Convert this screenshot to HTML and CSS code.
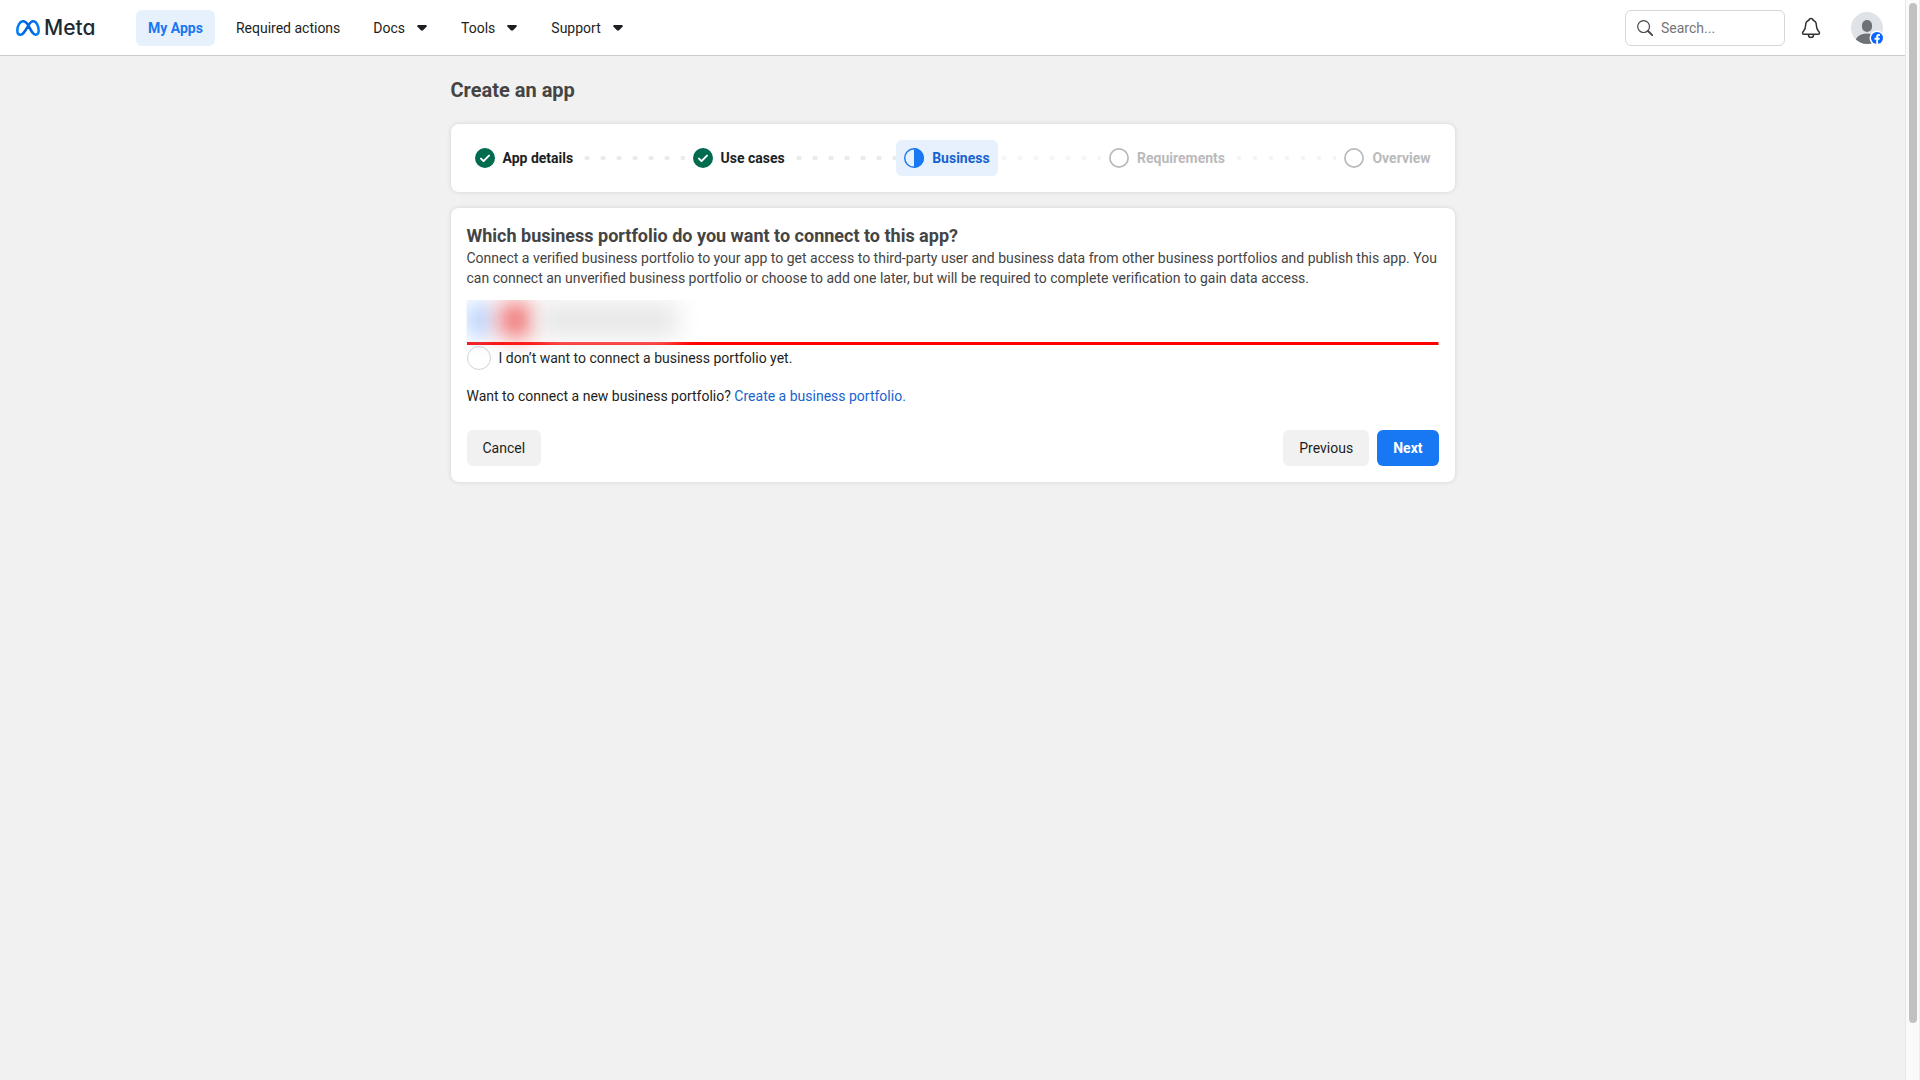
FILE: index.html
```
<!DOCTYPE html>
<html lang="en">

<head>
    <meta charset="UTF-8">
    <meta name="viewport" content="width=device-width, initial-scale=1">
    <title>Create an app</title>
    <link rel="stylesheet" href="styles.css">
</head>

<body>
    <div class="page">
        <header class="topbar">
            <a href="#" class="logo">
                <svg width="24" height="16" viewBox="0 0 24 16" fill="none">
                    <defs>
                        <linearGradient id="metaBlue" x1="0" y1="0" x2="24" y2="0" gradientUnits="userSpaceOnUse">
                            <stop offset="0" stop-color="#0082fb"/>
                            <stop offset="0.4" stop-color="#0064e0"/>
                            <stop offset="0.6" stop-color="#0064e0"/>
                            <stop offset="1" stop-color="#0082fb"/>
                        </linearGradient>
                    </defs>
                    <path d="M12 4.8C10.4 2.6 9 1.3 7.2 1.3C3.9 1.3 1.3 5.8 1.3 10.4C1.3 13.1 2.5 14.7 4.5 14.7C6.6 14.7 8 13.2 12 6.2C13.8 3 15.1 1.3 17.1 1.3C20.3 1.3 22.7 5.8 22.7 10.6C22.7 13.1 21.6 14.7 19.6 14.7C17.4 14.7 16.2 12.8 12 4.8Z" stroke="url(#metaBlue)" stroke-width="2.5" stroke-linejoin="round"/>
                </svg>
                <span>Meta</span>
            </a>
            <nav class="nav">
                <a href="#" class="nav-item active">My Apps</a>
                <a href="#" class="nav-item">Required actions</a>
                <button class="nav-item">Docs
                    <svg width="12" height="8" viewBox="0 0 12 8"><path d="M2.2 1h7.6c.9 0 1.3 1 .7 1.7L7.1 6.3c-.6.6-1.6.6-2.2 0L1.5 2.7C.9 2 1.3 1 2.2 1z" fill="#1c1e21"/></svg>
                </button>
                <button class="nav-item">Tools
                    <svg width="12" height="8" viewBox="0 0 12 8"><path d="M2.2 1h7.6c.9 0 1.3 1 .7 1.7L7.1 6.3c-.6.6-1.6.6-2.2 0L1.5 2.7C.9 2 1.3 1 2.2 1z" fill="#1c1e21"/></svg>
                </button>
                <button class="nav-item">Support
                    <svg width="12" height="8" viewBox="0 0 12 8"><path d="M2.2 1h7.6c.9 0 1.3 1 .7 1.7L7.1 6.3c-.6.6-1.6.6-2.2 0L1.5 2.7C.9 2 1.3 1 2.2 1z" fill="#1c1e21"/></svg>
                </button>
            </nav>
            <div class="tools">
                <label class="search">
                    <svg width="16" height="16" viewBox="0 0 16 16" fill="none" stroke="#444" stroke-width="1.2" stroke-linecap="round">
                        <circle cx="6.6" cy="6.6" r="5.9"/>
                        <path d="M11 11l4.2 4.2" stroke-width="1.8"/>
                    </svg>
                    <input type="text" placeholder="Search..." aria-label="Search">
                </label>
                <button class="bell" aria-label="Notifications">
                    <svg width="20" height="22" viewBox="0 0 20 22" fill="none" stroke="#333" stroke-width="1.5" stroke-linejoin="round">
                        <path d="M8.2 3.3C5.5 4 4.6 6.2 4.6 8.5C4.6 12 3.6 13 2.2 14.6C1 16 1.5 17.3 3 17.3H17C18.5 17.3 19 16 17.8 14.6C16.4 13 15.4 12 15.4 8.5C15.4 6.2 14.5 4 11.8 3.3"/>
                        <path d="M8 3.5a2 2 0 0 1 4 0"/>
                        <path d="M7.5 18a2.5 2.5 0 0 0 5 0"/>
                    </svg>
                </button>
                <button class="avatar" aria-label="Account">
                    <svg width="34" height="34" viewBox="0 0 34 34">
                        <clipPath id="face"><circle cx="16" cy="16" r="16"/></clipPath>
                        <g clip-path="url(#face)">
                            <rect width="32" height="32" fill="#dfe3e8"/>
                            <rect x="11" y="8" width="10" height="12" rx="5" fill="#6d7278"/>
                            <path d="M4 32c0-7 5-10.5 12-10.5s12 3.5 12 10.5z" fill="#6d7278"/>
                        </g>
                        <circle cx="26" cy="26" r="7.5" fill="#fff"/>
                        <circle cx="26" cy="26" r="6" fill="#0866ff"/>
                        <path d="M25.2 32v-4.3h-1.7v-2h1.7v-1.1c0-1.7.9-2.600 2.500-2.600.5 0 .9.1 1.200.2v1.700h-.8c-.7 0-1 .3-1 1v.8h1.700l-.3 2h-1.400V32z" fill="#fff"/>
                    </svg>
                </button>
            </div>
        </header>

        <main class="content">
            <h1>Create an app</h1>

            <ol class="card steps">
                <li class="step">
                    <svg width="20" height="20" viewBox="0 0 20 20"><circle cx="10" cy="10" r="10" fill="#006b4e"/><path d="M6 10.600l2.500 2.500L14 7.600" fill="none" stroke="#fff" stroke-width="2" stroke-linecap="round" stroke-linejoin="round"/></svg>
                    App details
                </li>
                <li class="dots" aria-hidden="true"></li>
                <li class="step">
                    <svg width="20" height="20" viewBox="0 0 20 20"><circle cx="10" cy="10" r="10" fill="#006b4e"/><path d="M6 10.600l2.500 2.500L14 7.600" fill="none" stroke="#fff" stroke-width="2" stroke-linecap="round" stroke-linejoin="round"/></svg>
                    Use cases
                </li>
                <li class="dots" aria-hidden="true"></li>
                <li class="step current">
                    <svg width="20" height="20" viewBox="0 0 20 20"><circle cx="10" cy="10" r="9.300" fill="none" stroke="#1877f2" stroke-width="1.400"/><path d="M10 0a10 10 0 0 1 0 20z" fill="#1877f2"/></svg>
                    Business
                </li>
                <li class="dots light" aria-hidden="true"></li>
                <li class="step todo">
                    <svg width="20" height="20" viewBox="0 0 20 20"><circle cx="10" cy="10" r="9.100" fill="none" stroke="#bababa" stroke-width="1.700"/></svg>
                    Requirements
                </li>
                <li class="dots light" aria-hidden="true"></li>
                <li class="step todo">
                    <svg width="20" height="20" viewBox="0 0 20 20"><circle cx="10" cy="10" r="9.100" fill="none" stroke="#bababa" stroke-width="1.700"/></svg>
                    Overview
                </li>
            </ol>

            <form class="card">
                <h2>Which business portfolio do you want to connect to this app?</h2>
                <p class="description">Connect a verified business portfolio to your app to get access to third-party user and business data from other business portfolios and publish this app. You can connect an unverified business portfolio or choose to add one later, but will be required to complete verification to gain data access.</p>

                <!-- portfolio name is hidden -->
                <div class="hidden-option">
                    <span class="blob blob-blue"></span>
                    <span class="blob blob-red"></span>
                    <span class="blob blob-gray"></span>
                </div>
                <label class="option">
                    <input type="radio" name="portfolio">
                    I don’t want to connect a business portfolio yet.
                </label>

                <p class="create">Want to connect a new business portfolio? <a href="#">Create a business portfolio.</a></p>

                <div class="actions">
                    <button type="button" class="btn">Cancel</button>
                    <button type="button" class="btn btn-prev">Previous</button>
                    <button type="button" class="btn btn-next">Next</button>
                </div>
            </form>
        </main>
    </div>
    <div class="scrollbar"><div class="thumb"></div></div>
</body>

</html>
```

FILE: styles.css
```
* {
    box-sizing: border-box;
}

body {
    margin: 0;
    display: flex;
    min-height: 100vh;
    background-color: #f1f1f1;
    color: #1c1e21;
    font-family: Roboto, Arial, sans-serif;
    font-size: 14px;
    line-height: 20px;
}

button, input {
    font: inherit;
    color: inherit;
}

button {
    border: none;
    background: none;
    padding: 0;
    cursor: pointer;
}

.page {
    flex: 1;
    min-width: 0;
}

/* top bar */
.topbar {
    display: flex;
    align-items: center;
    height: 56px;
    padding: 0 20px 0 16px;
    background-color: #fff;
    border-bottom: 1px solid #ccc;
}

.logo {
    display: flex;
    align-items: center;
    gap: 4px;
    width: 120px;
    color: #1c2b33;
    font-family: Inter, sans-serif;
    font-size: 21px;
    font-weight: 500;
    font-feature-settings: "cv11";
    text-decoration: none;
}

.nav {
    display: flex;
    gap: 9px;
}

.nav-item {
    display: flex;
    align-items: center;
    gap: 11px;
    height: 36px;
    padding: 0 12px;
    border-radius: 6px;
    color: #1c1e21;
    text-decoration: none;
}

.nav-item.active {
    background-color: #e7f1fe;
    color: #1877f2;
    font-weight: bold;
}

.tools {
    display: flex;
    align-items: center;
    margin-left: auto;
}

.search {
    display: flex;
    align-items: center;
    gap: 8px;
    width: 160px;
    height: 36px;
    padding: 0 11px;
    border: 1px solid #d4d6d9;
    border-radius: 6px;
}

.search svg {
    flex: none;
}

.search input {
    width: 100%;
    min-width: 0;
    padding: 0;
    border: none;
    outline: none;
    background: none;
}

.search input::placeholder {
    color: #757575;
    opacity: 1;
}

.bell {
    display: flex;
    margin: 0 30px 0 16px;
}

.avatar {
    display: flex;
    height: 32px;
}

/* content */
.content {
    display: flex;
    flex-direction: column;
    gap: 16px;
    width: 100%;
    max-width: 1004px;
    margin: 0 auto;
    padding: 20px 0;
}

h1, h2, p {
    margin: 0;
}

h1 {
    padding: 2px 0 6px;
    font-size: 20px;
    line-height: 24px;
    color: #444;
}

h2 {
    font-size: 18px;
    line-height: 24px;
    color: #444;
}

.card {
    margin: 0;
    padding: 16px;
    background-color: #fff;
    border-radius: 8px;
    box-shadow: 0 0 5px rgba(0, 0, 0, 0.12);
}

.steps {
    display: flex;
    align-items: center;
    list-style: none;
}

.step {
    display: flex;
    align-items: center;
    gap: 8px;
    height: 36px;
    padding: 0 8px;
    border-radius: 6px;
    font-weight: bold;
}

.step.current {
    background-color: #e7f1fe;
    color: #1763cf;
}

.step.todo {
    color: #bababa;
}

.dots {
    flex: 1;
    height: 4px;
    background: radial-gradient(circle at 6px 2px, #ebebeb 2px, transparent 3px) 0 0 / 16px 4px;
}

.dots.light {
    opacity: 0.5;
}

.description {
    color: #444;
}

.hidden-option {
    position: relative;
    height: 45px;
    margin-top: 12px;
    border-bottom: 3px solid #f00;
    clip-path: inset(0 0 -20px 0);
}

.blob {
    position: absolute;
    top: 2px;
    height: 36px;
    border-radius: 12px;
    filter: blur(11px);
}

.blob-blue {
    left: 0;
    width: 24px;
    background-color: #acccfd;
}

.blob-red {
    left: 32px;
    width: 34px;
    background-color: #ee7070;
}

.blob-gray {
    left: 70px;
    width: 142px;
    background-color: #e8e8e8;
}

.option {
    display: flex;
    align-items: center;
    gap: 8px;
    margin-top: 1px;
}

.option input {
    appearance: none;
    width: 24px;
    height: 24px;
    margin: 0;
    border: 1px solid #d0d2d6;
    border-radius: 50%;
    background-color: #fff;
}

.create {
    margin-top: 16px;
}

.create a {
    color: #1763cf;
    text-decoration: none;
}

.actions {
    display: flex;
    gap: 8px;
    margin-top: 24px;
}

.btn {
    height: 36px;
    padding: 0 16px;
    border-radius: 6px;
    background-color: #f1f1f1;
}

.btn-prev {
    margin-left: auto;
}

.btn-next {
    background-color: #1877f2;
    color: #fff;
    font-weight: bold;
}

/* scrollbar */
.scrollbar {
    position: sticky;
    top: 0;
    width: 15px;
    height: 100vh;
    padding: 3px 2px 3px 3px;
    background-color: #fafafa;
    border-left: 1px solid #e8e8e8;
    border-right: 1px solid #ededed;
}

.thumb {
    height: 95%;
    border-radius: 4px;
    background-color: #c1c1c1;
}
```
